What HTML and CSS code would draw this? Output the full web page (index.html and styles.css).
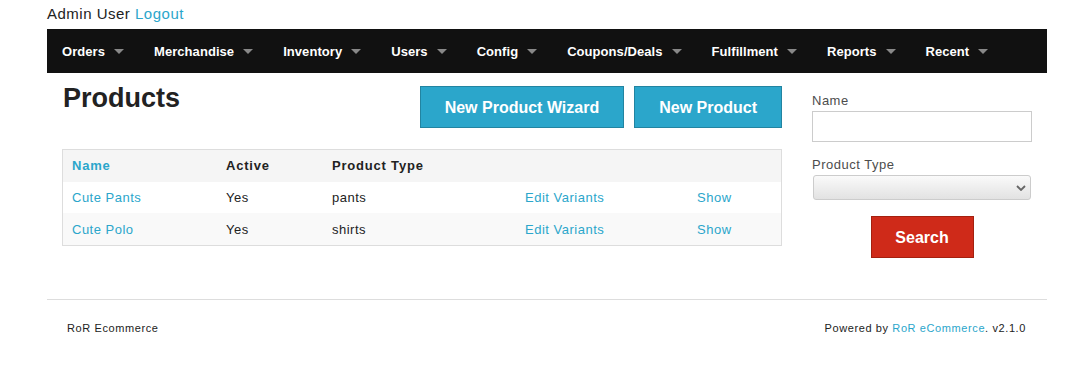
FILE: index.html
```html
<!DOCTYPE html>
<html lang="en">
<head>
    <meta charset="UTF-8">
    <title>Products - Admin</title>
    <link rel="stylesheet" href="styles.css">
</head>
<body>
    <div class="page">
        <!-- Usuario -->
        <div class="user-bar">Admin User <a href="#">Logout</a></div>

        <!-- Menu principal -->
        <nav class="top-bar">
            <a href="#" class="menu-item">Orders <span class="caret"></span></a>
            <a href="#" class="menu-item">Merchandise <span class="caret"></span></a>
            <a href="#" class="menu-item">Inventory <span class="caret"></span></a>
            <a href="#" class="menu-item">Users <span class="caret"></span></a>
            <a href="#" class="menu-item">Config <span class="caret"></span></a>
            <a href="#" class="menu-item">Coupons/Deals <span class="caret"></span></a>
            <a href="#" class="menu-item">Fulfillment <span class="caret"></span></a>
            <a href="#" class="menu-item">Reports <span class="caret"></span></a>
            <a href="#" class="menu-item">Recent <span class="caret"></span></a>
        </nav>

        <div class="main">
            <!-- Lista de produtos -->
            <div class="content">
                <div class="content-head">
                    <h2 class="page-title">Products</h2>
                    <div class="actions">
                        <a href="#" class="button">New Product Wizard</a>
                        <a href="#" class="button">New Product</a>
                    </div>
                </div>

                <table class="list">
                    <thead>
                        <tr>
                            <th class="col-name"><a href="#">Name</a></th>
                            <th class="col-active">Active</th>
                            <th class="col-type">Product Type</th>
                            <th class="col-edit"></th>
                            <th></th>
                        </tr>
                    </thead>
                    <tbody>
                        <tr>
                            <td><a href="#">Cute Pants</a></td>
                            <td>Yes</td>
                            <td>pants</td>
                            <td><a href="#">Edit Variants</a></td>
                            <td><a href="#">Show</a></td>
                        </tr>
                        <tr>
                            <td><a href="#">Cute Polo</a></td>
                            <td>Yes</td>
                            <td>shirts</td>
                            <td><a href="#">Edit Variants</a></td>
                            <td><a href="#">Show</a></td>
                        </tr>
                    </tbody>
                </table>
            </div>

            <!-- Filtro -->
            <aside class="sidebar">
                <form class="search-form">
                    <label for="name">Name</label>
                    <input type="text" id="name">
                    <label for="product_type">Product Type</label>
                    <div class="select-wrap">
                        <select id="product_type"><option></option></select>
                        <svg class="chevron" width="10" height="6" viewBox="0 0 10 6"><path d="M1 1 L5 5 L9 1" fill="none" stroke="#666" stroke-width="1.8"/></svg>
                    </div>
                    <div class="form-actions">
                        <button type="button" class="button alert">Search</button>
                    </div>
                </form>
            </aside>
        </div>

        <hr class="divider">

        <footer class="footer">
            <span>RoR Ecommerce</span>
            <span>Powered by <a href="#">RoR eCommerce</a>. v2.1.0</span>
        </footer>
    </div>
</body>
</html>
```

FILE: styles.css
```css
/* Estilo geral */
body {
    margin: 0;
    font-family: 'Liberation Sans', Arial, sans-serif;
    color: #222;
    background: #fff;
}

a {
    color: #2ba6cb;
    text-decoration: none;
}

.page {
    width: 1000px;
    margin-left: 47px;
}

.user-bar {
    font-size: 15px;
    line-height: 18px;
    letter-spacing: 0.5px;
    padding-top: 5px;
    height: 24px;
}

/* Menu */
.top-bar {
    display: flex;
    height: 44px;
    align-items: center;
    background: #111;
}

.menu-item {
    display: flex;
    align-items: center;
    padding: 0 15px;
    color: #fff;
    font-weight: bold;
    font-size: 13px;
    letter-spacing: 0.06px;
}

.caret {
    display: inline-block;
    margin-left: 9px;
    width: 0;
    height: 0;
    border-left: 5px solid transparent;
    border-right: 5px solid transparent;
    border-top: 5px solid #888;
}

/* Conteudo */
.main {
    display: flex;
}

.content {
    width: 720px;
    padding: 0 15px;
}

.content-head {
    display: flex;
    justify-content: space-between;
    align-items: flex-start;
    padding-top: 13px;
    height: 63px;
}

.page-title {
    margin: 0 0 0 1px;
    font-size: 27px;
    line-height: 22px;
    padding-top: 1px;
}

.actions {
    display: flex;
    gap: 10px;
}

.button {
    display: inline-block;
    box-sizing: border-box;
    height: 42px;
    padding: 2px 24px 0;
    background: #2ba6cb;
    border: 1px solid #2284a1;
    color: #fff;
    font-family: 'Liberation Sans', Arial, sans-serif;
    font-weight: bold;
    font-size: 16px;
    line-height: 38px;
    text-align: center;
}

.button.alert {
    background: #cf2a19;
    border-color: #a4200f;
    width: 103px;
    padding: 2px 0 0;
    cursor: pointer;
}

/* Tabela */
.list {
    width: 720px;
    border-collapse: collapse;
    border: 1px solid #ddd;
    font-size: 13px;
    line-height: 15px;
    letter-spacing: 0.5px;
}

.list th {
    background: #f5f5f5;
    text-align: left;
    font-weight: bold;
    letter-spacing: 0.8px;
    padding: 8px 9px 9px;
}

.list td {
    padding: 8px 9px;
}

.list tbody tr:nth-child(2) td {
    background: #f9f9f9;
    padding-top: 9px;
}

.col-name { width: 136px; }
.col-active { width: 88px; }
.col-type { width: 175px; }
.col-edit { width: 154px; }

/* Barra lateral */
.sidebar {
    width: 220px;
    padding: 0 15px;
}

.search-form {
    padding-top: 20px;
}

.search-form label {
    display: block;
    font-size: 13px;
    color: #4d4d4d;
    letter-spacing: 0.5px;
    line-height: 16px;
    margin-bottom: 2px;
}

.search-form input {
    display: block;
    box-sizing: border-box;
    width: 220px;
    height: 31px;
    border: 1px solid #ccc;
    margin: 0 0 15px;
}

.select-wrap {
    position: relative;
    margin-left: 1px;
}

.select-wrap select {
    appearance: none;
    display: block;
    width: 218px;
    height: 25px;
    border: 1px solid #ccc;
    border-radius: 3px;
    background: linear-gradient(#fafafa, #e2e2e2);
}

.chevron {
    position: absolute;
    right: 6px;
    top: 10px;
}

.form-actions {
    display: flex;
    justify-content: center;
    padding-top: 16px;
}

/* Rodape */
.divider {
    border: 0;
    border-top: 1px solid #ddd;
    margin: 41px 0 0;
}

.footer {
    display: flex;
    justify-content: space-between;
    padding: 22px 21px 0 20px;
    font-size: 11px;
    letter-spacing: 0.6px;
}
```
